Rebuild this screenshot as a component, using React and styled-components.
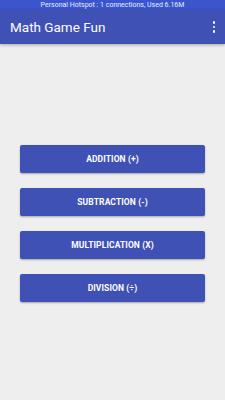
import styled, { createGlobalStyle } from "styled-components";

const GlobalStyle = createGlobalStyle`
  html, body {
    margin: 0;
    padding: 0;
    background: #eeeeee;
    font-family: Roboto, "Liberation Sans", sans-serif;
  }
`;

const Screen = styled.div`
  width: 225px;
  height: 400px;
  display: flex;
  flex-direction: column;
  background: #eeeeee;
  overflow: hidden;
`;

const StatusBar = styled.div`
  height: 10px;
  background: #3b55cc;
  color: #e8ebff;
  font-size: 7px;
  line-height: 10px;
  text-align: center;
  white-space: nowrap;
`;

const Toolbar = styled.header`
  height: 34px;
  background: #3f51b5;
  display: flex;
  align-items: center;
  justify-content: space-between;
  padding: 0 8px 0 10px;
  box-shadow: 0 1px 3px rgba(0, 0, 0, 0.3);
  position: relative;
  z-index: 1;
`;

const Title = styled.h1`
  margin: 0;
  color: #ffffff;
  font-size: 13.5px;
  font-weight: 400;
`;

const MenuButton = styled.div`
  display: flex;
  flex-direction: column;
  gap: 2px;
  padding: 2px 2px;

  span {
    width: 2.5px;
    height: 2.5px;
    border-radius: 50%;
    background: #ffffff;
  }
`;

const Content = styled.main`
  flex: 1;
  display: flex;
  flex-direction: column;
  align-items: center;
  gap: 15.5px;
  padding-top: 101px;
`;

const GameButton = styled.button`
  width: 185px;
  height: 27.5px;
  padding: 0;
  border: none;
  border-radius: 2px;
  background: #3f51b5;
  color: #ffffff;
  font-family: Roboto, "Liberation Sans", sans-serif;
  font-size: 8.5px;
  font-weight: 700;
  letter-spacing: 0.1px;
  box-shadow: 0 1px 2px rgba(0, 0, 0, 0.3);
`;

const games = ["ADDITION (+)", "SUBTRACTION (-)", "MULTIPLICATION (X)", "DIVISION (÷)"];

export default function App() {
  return (
    <>
      <GlobalStyle />
      <Screen>
        <StatusBar>Personal Hotspot : 1 connections, Used 6.16M</StatusBar>
        <Toolbar>
          <Title>Math Game Fun</Title>
          <MenuButton>
            <span />
            <span />
            <span />
          </MenuButton>
        </Toolbar>
        <Content>
          {games.map((g) => (
            <GameButton key={g}>{g}</GameButton>
          ))}
        </Content>
      </Screen>
    </>
  );
}
